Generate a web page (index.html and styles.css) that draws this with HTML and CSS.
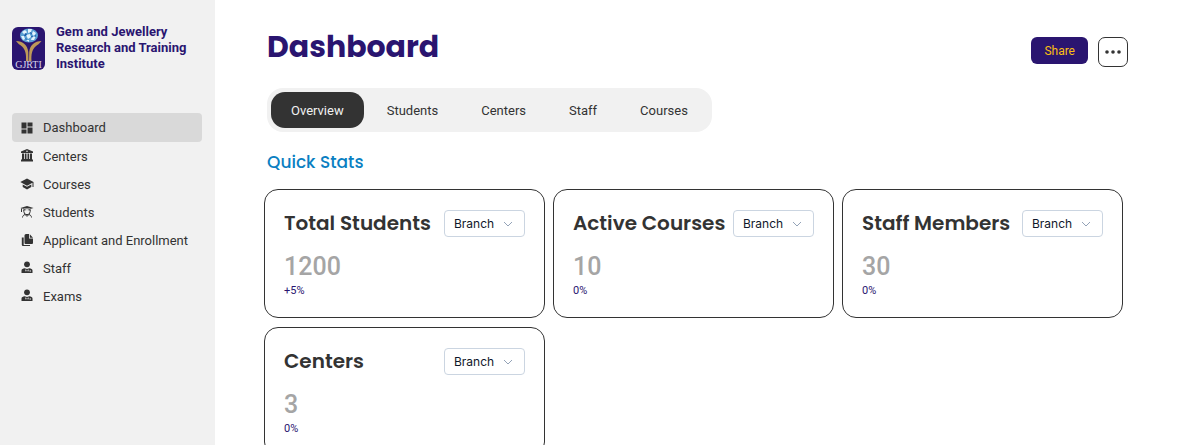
FILE: index.html
```html
<!DOCTYPE html>
<html lang="en">
<head>
<meta charset="utf-8">
<meta name="viewport" content="width=device-width, initial-scale=1">
<title>Dashboard</title>
<link rel="stylesheet" href="styles.css">
</head>
<body>
<div class="app">
  <aside class="sidebar">
    <div class="brand">
      <svg class="brand-logo" viewBox="0 0 33 43" aria-hidden="true">
        <rect width="33" height="43" rx="6" fill="#2a1570"/>
        <ellipse cx="17" cy="8.500" rx="9" ry="7" fill="#5aa0d4"/>
        <path d="M10 5l3-2 2 2-2 3zM16 2l4 0-1 3-3 1zM21 4l3 2-2 3-2-2zM9 9l3 0 1 3-2 1zM14 8l4-1 1 3-3 2zM20 10l4-1-2 4-3 0zM14 13l3 0 0 2z" fill="#e4f3fc"/>
        <path d="M13 6l2 1-1 2-2 0zM18 5l2 1-1 2zM13 11l2 1-1 1zM19 9l2 0-1 2zM22 9l2-1 0 2z" fill="#1b5ca8"/>
        <path d="M4 14c7 0 11.500 4 12.300 11l.2 9h-2.500c.3-7-.5-11-4-14.500-2-1.500-4-3-6-5.500zM29.500 14c-7 0-11.500 4-12.300 11l-.2 9h2.500c-.3-7 .5-11 4-14.500 2-1.500 4-3 6-5.500z" fill="#bd9a59"/>
        <text x="16.500" y="41" class="brand-mark">GJRTI</text>
      </svg>
      <p class="brand-name">Gem and Jewellery Research and Training Institute</p>
    </div>
    <nav class="menu" aria-label="Main">
      <a class="menu-item menu-item-active" href="#" aria-current="page">
        <svg class="menu-icon" viewBox="0 0 14 14"><path d="M1.500 1.500h5v6h-5zM1.500 8.500h5v4h-5zM7.500 1.500h5v4h-5zM7.500 6.500h5v6h-5z"/></svg>
        Dashboard</a>
      <a class="menu-item" href="#">
        <svg class="menu-icon" viewBox="0 0 14 14"><path fill-rule="evenodd" d="M7 0l6 2.500V4H1V2.500zM7 1.500a.8.8 0 1 0 0 1.600.8.800 0 0 0 0-1.600zM2 4.500h2V10H2zM4.800 4.500h1.700V10H4.800zM7.500 4.500h1.700V10H7.500zM10 4.500h2V10h-2zM1.500 10h11v1h.5v1.500H1V11h.5z"/></svg>
        Centers</a>
      <a class="menu-item" href="#">
        <svg class="menu-icon" viewBox="0 0 14 14"><path d="M7 1.500L.3 5 7 8.700l5.500-3V10h1V5zM2.700 7.400v2.500L7 12.400l4.300-2.500V7.400L7 9.800z"/></svg>
        Courses</a>
      <a class="menu-item" href="#">
        <svg class="menu-icon" viewBox="0 0 14 14"><path d="M7 1L.5 3 7 5l6.500-2zM1 3h1v4H1zM3.500 3.500h7v2L7 4.900l-3.500.6z"/><path class="menu-line" d="M3.800 5v1.500a3.200 3.200 0 0 0 6.400 0V5M2.500 12.500c0-1.500 1-2.500 2.500-3l2 1.800 2-1.800c1.500.5 2.500 1.500 2.500 3"/></svg>
        Students</a>
      <a class="menu-item" href="#">
        <svg class="menu-icon" viewBox="0 0 14 14"><path d="M6 1h3v4.500h4V10a1 1 0 0 1-1 1H5.500a1 1 0 0 1-1-1V2.500A1.500 1.500 0 0 1 6 1zM9.800 1.200l3.200 3.500H9.800zM1.800 4.500h1.900V12H10v1H3a1.200 1.200 0 0 1-1.200-1.200z"/></svg>
        Applicant and Enrollment</a>
      <a class="menu-item" href="#">
        <svg class="menu-icon" viewBox="0 0 14 14"><circle cx="7" cy="3.300" r="2.900"/><path fill-rule="evenodd" d="M1.500 12V9.500C1.500 8 3 7.500 4.700 7.200L7 8l2.300-.8c1.700.3 3.200.8 3.200 2.300V12zM5 8.500L6 11l.6-2zM9 8.500L8 11l-.6-2zM9.500 9.500v1h1.500v-1z"/></svg>
        Staff</a>
      <a class="menu-item" href="#">
        <svg class="menu-icon" viewBox="0 0 14 14"><circle cx="7" cy="3.300" r="2.900"/><path fill-rule="evenodd" d="M1.500 12V9.500C1.500 8 3 7.500 4.700 7.200L7 8l2.300-.8c1.700.3 3.200.8 3.200 2.300V12zM5 8.500L6 11l.6-2zM9 8.500L8 11l-.6-2zM9.500 9.500v1h1.500v-1z"/></svg>
        Exams</a>
    </nav>
  </aside>

  <main class="content">
    <header class="page-head">
      <h1 class="page-title">Dashboard</h1>
      <div class="actions">
        <button class="share" type="button">Share</button>
        <button class="more" type="button" aria-label="More options">
          <svg class="more-icon" viewBox="0 0 16 4"><circle cx="2" cy="2" r="1.800"/><circle cx="8" cy="2" r="1.800"/><circle cx="14" cy="2" r="1.800"/></svg>
        </button>
      </div>
    </header>

    <nav class="tabs" aria-label="Sections">
      <button class="tab tab-active" type="button">Overview</button>
      <button class="tab" type="button">Students</button>
      <button class="tab" type="button">Centers</button>
      <button class="tab" type="button">Staff</button>
      <button class="tab" type="button">Courses</button>
    </nav>

    <h2 class="section-title">Quick Stats</h2>

    <section class="cards">
      <article class="card">
        <div class="card-head">
          <h3 class="card-title">Total Students</h3>
          <div class="picker">
            <select class="picker-select" aria-label="Total Students branch"><option>Branch</option></select>
            <svg class="picker-arrow" viewBox="0 0 10 6"><path d="M1 1l4 4 4-4"/></svg>
          </div>
        </div>
        <p class="card-value">1200</p>
        <p class="card-change">+5%</p>
      </article>
      <article class="card">
        <div class="card-head">
          <h3 class="card-title">Active Courses</h3>
          <div class="picker">
            <select class="picker-select" aria-label="Active Courses branch"><option>Branch</option></select>
            <svg class="picker-arrow" viewBox="0 0 10 6"><path d="M1 1l4 4 4-4"/></svg>
          </div>
        </div>
        <p class="card-value">10</p>
        <p class="card-change">0%</p>
      </article>
      <article class="card">
        <div class="card-head">
          <h3 class="card-title">Staff Members</h3>
          <div class="picker">
            <select class="picker-select" aria-label="Staff Members branch"><option>Branch</option></select>
            <svg class="picker-arrow" viewBox="0 0 10 6"><path d="M1 1l4 4 4-4"/></svg>
          </div>
        </div>
        <p class="card-value">30</p>
        <p class="card-change">0%</p>
      </article>
      <article class="card">
        <div class="card-head">
          <h3 class="card-title">Centers</h3>
          <div class="picker">
            <select class="picker-select" aria-label="Centers branch"><option>Branch</option></select>
            <svg class="picker-arrow" viewBox="0 0 10 6"><path d="M1 1l4 4 4-4"/></svg>
          </div>
        </div>
        <p class="card-value">3</p>
        <p class="card-change">0%</p>
      </article>
    </section>
  </main>
</div>
</body>
</html>
```
FILE: styles.css
```css
* { box-sizing: border-box; }

body {
  margin: 0;
  background: #fff;
  color: #333;
  font-family: Roboto, sans-serif;
  font-size: 13px;
}

h1, h2, h3, p { margin: 0; }

button, select { font: inherit; margin: 0; }

.app {
  display: flex;
  height: 100vh;
}

.sidebar {
  flex: 0 0 215px;
  padding: 24px 12px;
  background: #f1f1f1;
}

.brand {
  display: flex;
  align-items: center;
  gap: 11px;
}

.brand-logo {
  flex: none;
  width: 33px;
  height: 43px;
}

.brand-mark {
  fill: #d9d4ea;
  font-family: "Liberation Serif", serif;
  font-size: 10px;
  text-anchor: middle;
}

.brand-name {
  color: #2a1570;
  font-size: 13px;
  font-weight: 700;
  line-height: 16px;
}

.menu {
  display: flex;
  flex-direction: column;
  margin-top: 41px;
}

.menu-item {
  display: flex;
  align-items: center;
  gap: 9px;
  height: 28px;
  width: 190px;
  padding: 0 8px;
  border-radius: 4px;
  color: #333;
  text-decoration: none;
  white-space: nowrap;
}

.menu-item-active {
  height: 29px;
  background: #d9d9d9;
}

.menu-icon {
  flex: none;
  width: 14px;
  height: 14px;
  fill: #333;
}

.menu-line {
  fill: none;
  stroke: #333;
}

.content {
  flex: 1;
  min-width: 0;
  padding: 23px 63px 24px 49px;
  overflow: auto;
  scrollbar-width: none;
}

.page-head {
  display: flex;
  align-items: center;
  justify-content: space-between;
  padding-left: 3px;
}

.page-title {
  color: #2a1570;
  font-family: Poppins, Inter, sans-serif;
  font-size: 30px;
  font-weight: 700;
  line-height: 48px;
}

.actions {
  display: flex;
  align-items: flex-start;
  gap: 10px;
  padding-top: 10px;
}

.share {
  height: 27px;
  padding: 0 13px;
  border: 0;
  border-radius: 6px;
  background: #2a1570;
  color: #fcbf12;
  font-size: 12px;
}

.more {
  display: flex;
  align-items: center;
  justify-content: center;
  width: 30px;
  height: 30px;
  padding: 0;
  border: 1px solid #333;
  border-radius: 7px;
  background: #fff;
}

.more-icon {
  width: 16px;
  height: 4px;
  fill: #333;
}

.tabs {
  display: inline-flex;
  gap: 3px;
  margin: 17px 0 0 3px;
  padding: 4px;
  border-radius: 16px;
  background: #f1f1f1;
}

.tab {
  height: 36px;
  padding: 0 20px;
  border: 0;
  border-radius: 14px;
  background: transparent;
  color: #333;
}

.tab-active {
  background: #333;
  color: #f1f1f1;
}

.section-title {
  margin: 17px 0 0 3px;
  color: #0a7fc2;
  font-family: Poppins, Inter, sans-serif;
  font-size: 17px;
  font-weight: 500;
  line-height: 26px;
}

.cards {
  display: grid;
  grid-template-columns: repeat(3, minmax(0, 1fr));
  gap: 9px 8px;
  margin: 14px 5px 0 0;
}

.card {
  padding: 19px 19px 17px;
  border: 1px solid #333;
  border-radius: 14px;
  background: #fff;
}

.card-head {
  display: flex;
  align-items: center;
  justify-content: space-between;
}

.card-title {
  font-family: Poppins, Inter, sans-serif;
  font-size: 20px;
  font-weight: 600;
  line-height: 28px;
  white-space: nowrap;
}

.picker {
  position: relative;
  flex: none;
}

.picker-select {
  appearance: none;
  display: block;
  width: 81px;
  height: 27px;
  padding: 0 9px;
  border: 1px solid #cbd5e1;
  border-radius: 4px;
  background: #fff;
  color: #0f172a;
  font-family: Inter, sans-serif;
  font-size: 12px;
}

.picker-arrow {
  position: absolute;
  top: 11px;
  right: 12px;
  width: 10px;
  height: 6px;
  fill: none;
  stroke: #94a3b8;
  pointer-events: none;
}

.card-value {
  margin-top: 15px;
  color: #a5a5a5;
  font-size: 25px;
  font-weight: 500;
  line-height: 30px;
}

.card-change {
  color: #2a1570;
  font-size: 11px;
  line-height: 18px;
}
```
